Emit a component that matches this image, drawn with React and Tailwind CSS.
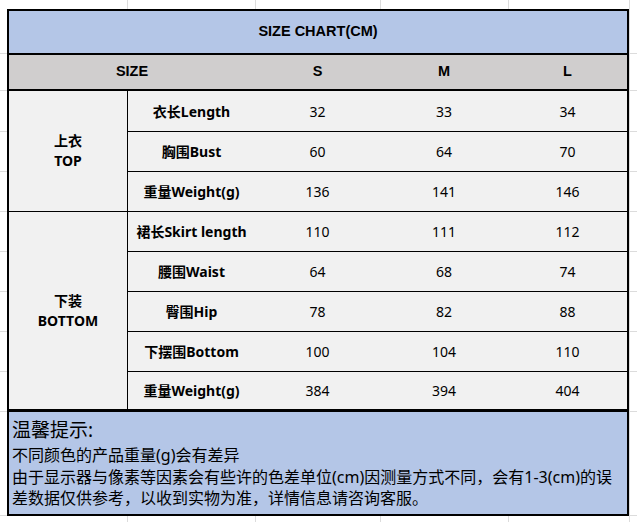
import React from 'react';

const top = [
  ['衣长Length', 32, 33, 34],
  ['胸围Bust', 60, 64, 70],
  ['重量Weight(g)', 136, 141, 146],
];

const bottom = [
  ['裙长Skirt length', 110, 111, 112],
  ['腰围Waist', 64, 68, 74],
  ['臀围Hip', 78, 82, 88],
  ['下摆围Bottom', 100, 104, 110],
  ['重量Weight(g)', 384, 394, 404],
];

const rowHeights = {
  top: ['h-10', 'h-10 border-t', 'h-10 border-t'],
  bottom: ['h-[39px]', 'h-10 border-t', 'h-10 border-t', 'h-10 border-t', 'h-[38px] border-t'],
};

function Row({ cells, cls }) {
  return (
    <div className={cls + ' grid grid-cols-[127px_125px_128px_119px] items-center border-black'}>
      <span className="text-center font-bold">{cells[0]}</span>
      <span className="text-center">{cells[1]}</span>
      <span className="text-center">{cells[2]}</span>
      <span className="text-center">{cells[3]}</span>
    </div>
  );
}

function Group({ zh, en, rows, heights, cls }) {
  return (
    <div className={cls + ' flex border-black'}>
      <div className="flex w-[119px] flex-col items-center justify-center border-r border-black font-bold leading-[20px]">
        <span>{zh}</span>
        <span>{en}</span>
      </div>
      <div className="flex flex-1 flex-col">
        {rows.map((r, i) => (
          <Row key={i} cells={r} cls={heights[i]} />
        ))}
      </div>
    </div>
  );
}

export default function App() {
  return (
    <div className="h-[522px] w-[637px] overflow-hidden bg-white bg-[linear-gradient(to_right,transparent_127px,#dcdcdc_127px,#dcdcdc_128px,transparent_128px,transparent_255px,#dcdcdc_255px,#dcdcdc_256px,transparent_256px,transparent_380px,#dcdcdc_380px,#dcdcdc_381px,transparent_381px,transparent_508px,#dcdcdc_508px,#dcdcdc_509px,transparent_509px,transparent_629px,#dcdcdc_629px,#dcdcdc_630px,transparent_630px),linear-gradient(to_bottom,transparent_53px,#dcdcdc_53px,#dcdcdc_54px,transparent_54px,transparent_90px,#dcdcdc_90px,#dcdcdc_91px,transparent_91px,transparent_131px,#dcdcdc_131px,#dcdcdc_132px,transparent_132px,transparent_171px,#dcdcdc_171px,#dcdcdc_172px,transparent_172px,transparent_211px,#dcdcdc_211px,#dcdcdc_212px,transparent_212px,transparent_251px,#dcdcdc_251px,#dcdcdc_252px,transparent_252px,transparent_291px,#dcdcdc_291px,#dcdcdc_292px,transparent_292px,transparent_331px,#dcdcdc_331px,#dcdcdc_332px,transparent_332px,transparent_371px,#dcdcdc_371px,#dcdcdc_372px,transparent_372px,transparent_411px,#dcdcdc_411px,#dcdcdc_412px,transparent_412px,transparent_515px,#dcdcdc_515px,#dcdcdc_516px,transparent_516px)] pl-[7px] pt-[9px]">
      <div className="w-[622px] border-2 border-black bg-[#f1f1f1] font-['Noto_Sans','Noto_Sans_CJK_SC',sans-serif] text-[14px] text-black">
        <div className="flex h-[44px] items-center justify-center border-b-2 border-black bg-[#b4c6e7] font-['Liberation_Sans',sans-serif] text-[14.5px] font-bold">
          SIZE CHART(CM)
        </div>
        <div className="grid h-[36px] grid-cols-[246px_125px_128px_119px] items-center border-b-2 border-black bg-[#d0cece] font-['Liberation_Sans',sans-serif] text-[14.5px] font-bold">
          <span className="text-center">SIZE</span>
          <span className="text-center">S</span>
          <span className="text-center">M</span>
          <span className="text-center">L</span>
        </div>
        <Group zh="上衣" en="TOP" rows={top} heights={rowHeights.top} cls="" />
        <Group zh="下装" en="BOTTOM" rows={bottom} heights={rowHeights.bottom} cls="border-t" />
        <div className="h-[105px] border-t-[3px] border-black bg-[#b4c6e7] pl-[3px] pt-[6px] whitespace-nowrap">
          <p className="text-[19px] leading-[24px]">温馨提示:</p>
          <div className="mt-[3px] text-[16px] leading-[21.5px]">
            <p>不同颜色的产品重量(g)会有差异</p>
            <p>由于显示器与像素等因素会有些许的色差单位(cm)因测量方式不同，会有1-3(cm)的误</p>
            <p>差数据仅供参考，以收到实物为准，详情信息请咨询客服。</p>
          </div>
        </div>
      </div>
    </div>
  );
}
